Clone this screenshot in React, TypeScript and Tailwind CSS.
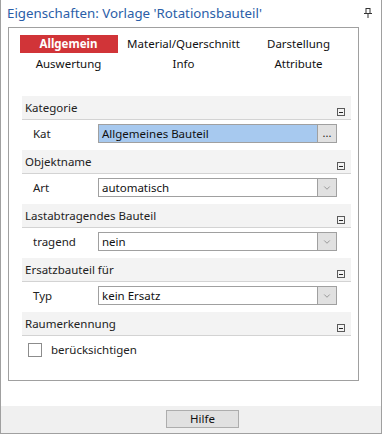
import { ChevronDown } from "lucide-react";

const font = { fontFamily: '"Noto Sans", "Liberation Sans", sans-serif' };

function Collapse() {
  return (
    <span className="w-[8px] h-[8px] border border-[#5a5a5a] flex items-center justify-center mb-[3px]">
      <span className="w-[4px] h-[1px] bg-[#222]" />
    </span>
  );
}

function Header({ label }: { label: string }) {
  return (
    <div className="h-[24px] bg-[#f3f3f3] border-b border-[#d3d3d3] flex items-end justify-between pl-[3px] pr-[6px]">
      <span className="self-center text-[11.5px] text-[#222] leading-none">{label}</span>
      <Collapse />
    </div>
  );
}

function Row({ label, value, kind }: { label: string; value: string; kind: "dots" | "select" }) {
  return (
    <div className="h-[30px] flex items-start pt-[4px]">
      <span className="w-[76px] pl-[11px] h-[19px] flex items-center text-[11.5px] text-[#222]">{label}</span>
      <div
        className={`w-[220px] h-[19px] border border-[#a0a0a0] flex items-center pl-[3px] text-[11.5px] text-[#111] ${
          kind === "dots" ? "bg-[#a7c9ef]" : "bg-white"
        }`}
      >
        {value}
      </div>
      <div className="w-[19px] h-[19px] border border-l-0 border-[#a0a0a0] bg-[#e1e1e1] flex items-center justify-center text-[11px] text-[#222]">
        {kind === "dots" ? (
          <span className="leading-none -mt-[3px]">...</span>
        ) : (
          <ChevronDown size={10} strokeWidth={1.25} className="text-[#555]" />
        )}
      </div>
    </div>
  );
}

export default function App() {
  const tabs = [
    ["Allgemein", "Material/Querschnitt", "Darstellung"],
    ["Auswertung", "Info", "Attribute"],
  ];

  return (
    <div className="w-[383px] h-[434px] bg-white" style={font}>
      <div className="w-[382px] h-[434px] flex flex-col border-l border-r border-b border-[#a0a0a0]">
        {/* title */}
        <div className="h-[27px] shrink-0 flex items-center justify-between pl-[6px] pr-[9px]">
          <span className="text-[13.3px] text-[#2b5ea8] leading-none">Eigenschaften: Vorlage 'Rotationsbauteil'</span>
          <svg width="8" height="10" viewBox="0 0 8 10" className="-mt-[1px]">
            <rect x="2" y="0.5" width="4" height="5" fill="none" stroke="#333" />
            <rect x="0" y="5" width="8" height="1" fill="#333" />
            <rect x="3.5" y="6" width="1" height="4" fill="#333" />
          </svg>
        </div>

        {/* main panel */}
        <div className="ml-[7px] mr-[22px] h-[354px] shrink-0 border border-[#a0a0a0]">
          <div className="pt-[7px] pl-[2px] grid grid-cols-[115px_115px_115px] gap-y-[2px]">
            {tabs.flat().map((t) => (
              <div key={t} className="h-[18px] flex items-center justify-center">
                {t === "Allgemein" ? (
                  <span className="w-[98px] h-[18px] bg-[#d13438] text-white font-bold text-[11.5px] flex items-center justify-center">
                    {t}
                  </span>
                ) : (
                  <span className="text-[11.5px] text-[#111]">{t}</span>
                )}
              </div>
            ))}
          </div>

          <div className="mt-[23px] ml-[13px] mr-[7px]">
            <Header label="Kategorie" />
            <Row label="Kat" value="Allgemeines Bauteil" kind="dots" />
            <Header label="Objektname" />
            <Row label="Art" value="automatisch" kind="select" />
            <Header label="Lastabtragendes Bauteil" />
            <Row label="tragend" value="nein" kind="select" />
            <Header label="Ersatzbauteil für" />
            <Row label="Typ" value="kein Ersatz" kind="select" />
            <Header label="Raumerkennung" />
            <div className="flex items-center pt-[5px] pl-[6px] gap-[9px]">
              <span className="w-[14px] h-[14px] border border-[#8c8c8c] bg-white" />
              <span className="text-[11.5px] text-[#222]">berücksichtigen</span>
            </div>
          </div>
        </div>

        <div className="flex-1" />

        {/* footer */}
        <div className="h-[27px] shrink-0 bg-[#f0f0f0] pt-[4px] pl-[165px]">
          <button className="w-[73px] h-[18px] border border-[#adadad] bg-[#e1e1e1] text-[11.5px] text-[#111] flex items-center justify-center">
            Hilfe
          </button>
        </div>
      </div>
    </div>
  );
}
